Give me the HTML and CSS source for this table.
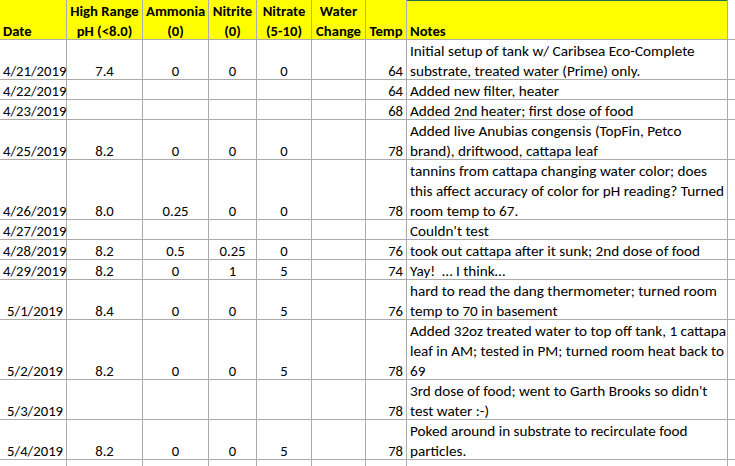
FILE: index.html
```html
<!DOCTYPE html>
<html>
<head>
<meta charset="utf-8">
<link rel="stylesheet" href="styles.css">
</head>
<body>
<div class="sheet">
  <div class="row head h2">
    <div class="c left">Date</div>
    <div class="c mid">High Range<br>pH (&lt;8.0)</div>
    <div class="c mid">Ammonia<br>(0)</div>
    <div class="c mid">Nitrite<br>(0)</div>
    <div class="c mid">Nitrate<br>(5-10)</div>
    <div class="c mid">Water<br>Change</div>
    <div class="c mid">Temp</div>
    <div class="c left notes-head">Notes</div>
    <div class="c blank"></div>
  </div>
  <div class="row h2">
    <div class="c right">4/21/2019</div><div class="c mid">7.4</div><div class="c mid">0</div><div class="c mid">0</div><div class="c mid">0</div><div class="c mid"></div><div class="c right">64</div>
    <div class="c note">Initial setup of tank w/ Caribsea Eco-Complete<br>substrate, treated water (Prime) only.</div><div class="c blank"></div>
  </div>
  <div class="row h1">
    <div class="c right">4/22/2019</div><div class="c mid"></div><div class="c mid"></div><div class="c mid"></div><div class="c mid"></div><div class="c mid"></div><div class="c right">64</div>
    <div class="c note">Added new filter, heater</div><div class="c blank"></div>
  </div>
  <div class="row h1">
    <div class="c right">4/23/2019</div><div class="c mid"></div><div class="c mid"></div><div class="c mid"></div><div class="c mid"></div><div class="c mid"></div><div class="c right">68</div>
    <div class="c note">Added 2nd heater; first dose of food</div><div class="c blank"></div>
  </div>
  <div class="row h2">
    <div class="c right">4/25/2019</div><div class="c mid">8.2</div><div class="c mid">0</div><div class="c mid">0</div><div class="c mid">0</div><div class="c mid"></div><div class="c right">78</div>
    <div class="c note">Added live Anubias congensis (TopFin, Petco<br>brand), driftwood, cattapa leaf</div><div class="c blank"></div>
  </div>
  <div class="row h3">
    <div class="c right">4/26/2019</div><div class="c mid">8.0</div><div class="c mid">0.25</div><div class="c mid">0</div><div class="c mid">0</div><div class="c mid"></div><div class="c right">78</div>
    <div class="c note">tannins from cattapa changing water color; does<br>this affect accuracy of color for pH reading? Turned<br>room temp to 67.</div><div class="c blank"></div>
  </div>
  <div class="row h1">
    <div class="c right">4/27/2019</div><div class="c mid"></div><div class="c mid"></div><div class="c mid"></div><div class="c mid"></div><div class="c mid"></div><div class="c right"></div>
    <div class="c note">Couldn't test</div><div class="c blank"></div>
  </div>
  <div class="row h1">
    <div class="c right">4/28/2019</div><div class="c mid">8.2</div><div class="c mid">0.5</div><div class="c mid">0.25</div><div class="c mid">0</div><div class="c mid"></div><div class="c right">76</div>
    <div class="c note">took out cattapa after it sunk; 2nd dose of food</div><div class="c blank"></div>
  </div>
  <div class="row h1">
    <div class="c right">4/29/2019</div><div class="c mid">8.2</div><div class="c mid">0</div><div class="c mid">1</div><div class="c mid">5</div><div class="c mid"></div><div class="c right">74</div>
    <div class="c note">Yay!&nbsp; … I think…</div><div class="c blank"></div>
  </div>
  <div class="row h2">
    <div class="c right">5/1/2019</div><div class="c mid">8.4</div><div class="c mid">0</div><div class="c mid">0</div><div class="c mid">5</div><div class="c mid"></div><div class="c right">76</div>
    <div class="c note">hard to read the dang thermometer; turned room<br>temp to 70 in basement</div><div class="c blank"></div>
  </div>
  <div class="row h3">
    <div class="c right">5/2/2019</div><div class="c mid">8.2</div><div class="c mid">0</div><div class="c mid">0</div><div class="c mid">5</div><div class="c mid"></div><div class="c right">78</div>
    <div class="c note">Added 32oz treated water to top off tank, 1 cattapa<br>leaf in AM; tested in PM; turned room heat back to<br>69</div><div class="c blank"></div>
  </div>
  <div class="row h2">
    <div class="c right">5/3/2019</div><div class="c mid"></div><div class="c mid"></div><div class="c mid"></div><div class="c mid"></div><div class="c mid"></div><div class="c right">78</div>
    <div class="c note">3rd dose of food; went to Garth Brooks so didn't<br>test water :-)</div><div class="c blank"></div>
  </div>
  <div class="row h2">
    <div class="c right">5/4/2019</div><div class="c mid">8.2</div><div class="c mid">0</div><div class="c mid">0</div><div class="c mid">5</div><div class="c mid"></div><div class="c right">78</div>
    <div class="c note">Poked around in substrate to recirculate food<br>particles.</div><div class="c blank"></div>
  </div>
  <div class="row h1">
    <div class="c right"></div><div class="c mid"></div><div class="c mid"></div><div class="c mid"></div><div class="c mid"></div><div class="c mid"></div><div class="c right"></div>
    <div class="c note"></div><div class="c blank"></div>
  </div>
</div>
</body>
</html>
```
FILE: styles.css
```css
html, body {
  margin: 0;
  padding: 0;
  background: #ffffff;
}
.sheet {
  width: 735px;
  height: 466px;
  font-family: Carlito, Calibri, Lato, "Liberation Sans", sans-serif;
  font-size: 14.67px;
  line-height: 20px;
  color: #000000;
  overflow: hidden;
}
.row {
  display: grid;
  grid-template-columns: 67px 76px 66px 48px 55px 54px 41px 321px 7px;
}
.h1 { height: 20px; }
.h2 { height: 40px; }
.h3 { height: 60px; }
.c {
  box-sizing: border-box;
  border-right: 1px solid #ababab;
  border-bottom: 1px solid #ababab;
  padding: 0 3px;
  display: flex;
  flex-direction: column;
  justify-content: flex-end;
  white-space: nowrap;
}
.c::after {
  content: "";
  display: block;
  height: 0;
  margin-top: -2px;
}
.left { text-align: left; }
.mid { text-align: center; }
.right { text-align: right; }
.note { text-align: left; font-size: 15.2px; }
.blank { border-right: none; }
.head .c { background: #ffff00; font-weight: bold; }
.head .c.blank { background: #ffffff; }
.notes-head { box-shadow: inset 0 1px 0 #217346; }
```
